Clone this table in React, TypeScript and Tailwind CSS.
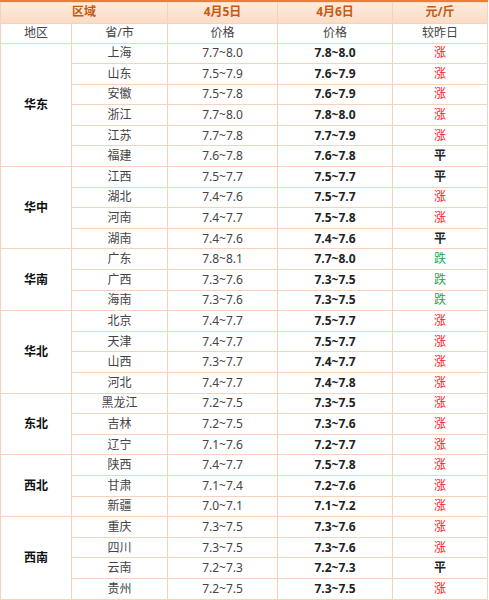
const rows: [string, string, string, string][] = [
  ["上海", "7.7~8.0", "7.8~8.0", "涨"],
  ["山东", "7.5~7.9", "7.6~7.9", "涨"],
  ["安徽", "7.5~7.8", "7.6~7.9", "涨"],
  ["浙江", "7.7~8.0", "7.8~8.0", "涨"],
  ["江苏", "7.7~7.8", "7.7~7.9", "涨"],
  ["福建", "7.6~7.8", "7.6~7.8", "平"],
  ["江西", "7.5~7.7", "7.5~7.7", "平"],
  ["湖北", "7.4~7.6", "7.5~7.7", "涨"],
  ["河南", "7.4~7.7", "7.5~7.8", "涨"],
  ["湖南", "7.4~7.6", "7.4~7.6", "平"],
  ["广东", "7.8~8.1", "7.7~8.0", "跌"],
  ["广西", "7.3~7.6", "7.3~7.5", "跌"],
  ["海南", "7.3~7.6", "7.3~7.5", "跌"],
  ["北京", "7.4~7.7", "7.5~7.7", "涨"],
  ["天津", "7.4~7.7", "7.5~7.7", "涨"],
  ["山西", "7.3~7.7", "7.4~7.7", "涨"],
  ["河北", "7.4~7.7", "7.4~7.8", "涨"],
  ["黑龙江", "7.2~7.5", "7.3~7.5", "涨"],
  ["吉林", "7.2~7.5", "7.3~7.6", "涨"],
  ["辽宁", "7.1~7.6", "7.2~7.7", "涨"],
  ["陕西", "7.4~7.7", "7.5~7.8", "涨"],
  ["甘肃", "7.1~7.4", "7.2~7.6", "涨"],
  ["新疆", "7.0~7.1", "7.1~7.2", "涨"],
  ["重庆", "7.3~7.5", "7.3~7.6", "涨"],
  ["四川", "7.3~7.5", "7.3~7.6", "涨"],
  ["云南", "7.2~7.3", "7.2~7.3", "平"],
  ["贵州", "7.2~7.5", "7.3~7.5", "涨"],
];

// region name -> index of first row and span
const regions: Record<number, [string, number]> = {
  0: ["华东", 6],
  6: ["华中", 4],
  10: ["华南", 3],
  13: ["华北", 4],
  17: ["东北", 3],
  20: ["西北", 3],
  23: ["西南", 4],
};

function Trend({ t }: { t: string }) {
  if (t === "涨") return <span className="text-[#ff1a1a]">涨</span>;
  if (t === "跌") return <span className="text-[#1fa552]">跌</span>;
  return <span className="font-bold text-[#222]">平</span>;
}

const cell = "border border-[#f5d2b9] text-center p-0";

export default function App() {
  return (
    <div
      className="w-[489px] h-[600px] bg-white overflow-hidden"
      style={{ fontFamily: '"Noto Sans", "Noto Sans CJK SC", sans-serif' }}
    >
      <table className="w-[487px] border-collapse table-fixed text-[12px] leading-none">
        <colgroup>
          <col className="w-[71px]" />
          <col className="w-[96px]" />
          <col className="w-[110px]" />
          <col className="w-[115px]" />
          <col className="w-[95px]" />
        </colgroup>
        <thead>
          <tr className="h-[22px] bg-gradient-to-b from-[#fdebdd] to-[#fbdcc6] font-bold text-[#c55a11] border-t-[2px] border-t-[#ee7d31]">
            <th colSpan={2} className={cell}>区域</th>
            <th className={cell}>4月5日</th>
            <th className={cell}>4月6日</th>
            <th className={cell}>元/斤</th>
          </tr>
          <tr className="h-[20px] text-[#444] font-normal">
            <td className={cell}>地区</td>
            <td className={cell}>省/市</td>
            <td className={cell}>价格</td>
            <td className={cell}>价格</td>
            <td className={cell}>较昨日</td>
          </tr>
        </thead>
        <tbody>
          {rows.map((r, i) => (
            <tr key={r[0]} className="h-[20.6px]">
              {regions[i] && (
                <td rowSpan={regions[i][1]} className={`${cell} font-bold text-[#111]`}>
                  {regions[i][0]}
                </td>
              )}
              <td className={`${cell} text-[#444]`}>{r[0]}</td>
              <td className={`${cell} text-[#444]`}>{r[1]}</td>
              <td className={`${cell} font-bold text-[#222]`}>{r[2]}</td>
              <td className={cell}>
                <Trend t={r[3]} />
              </td>
            </tr>
          ))}
        </tbody>
      </table>
    </div>
  );
}
